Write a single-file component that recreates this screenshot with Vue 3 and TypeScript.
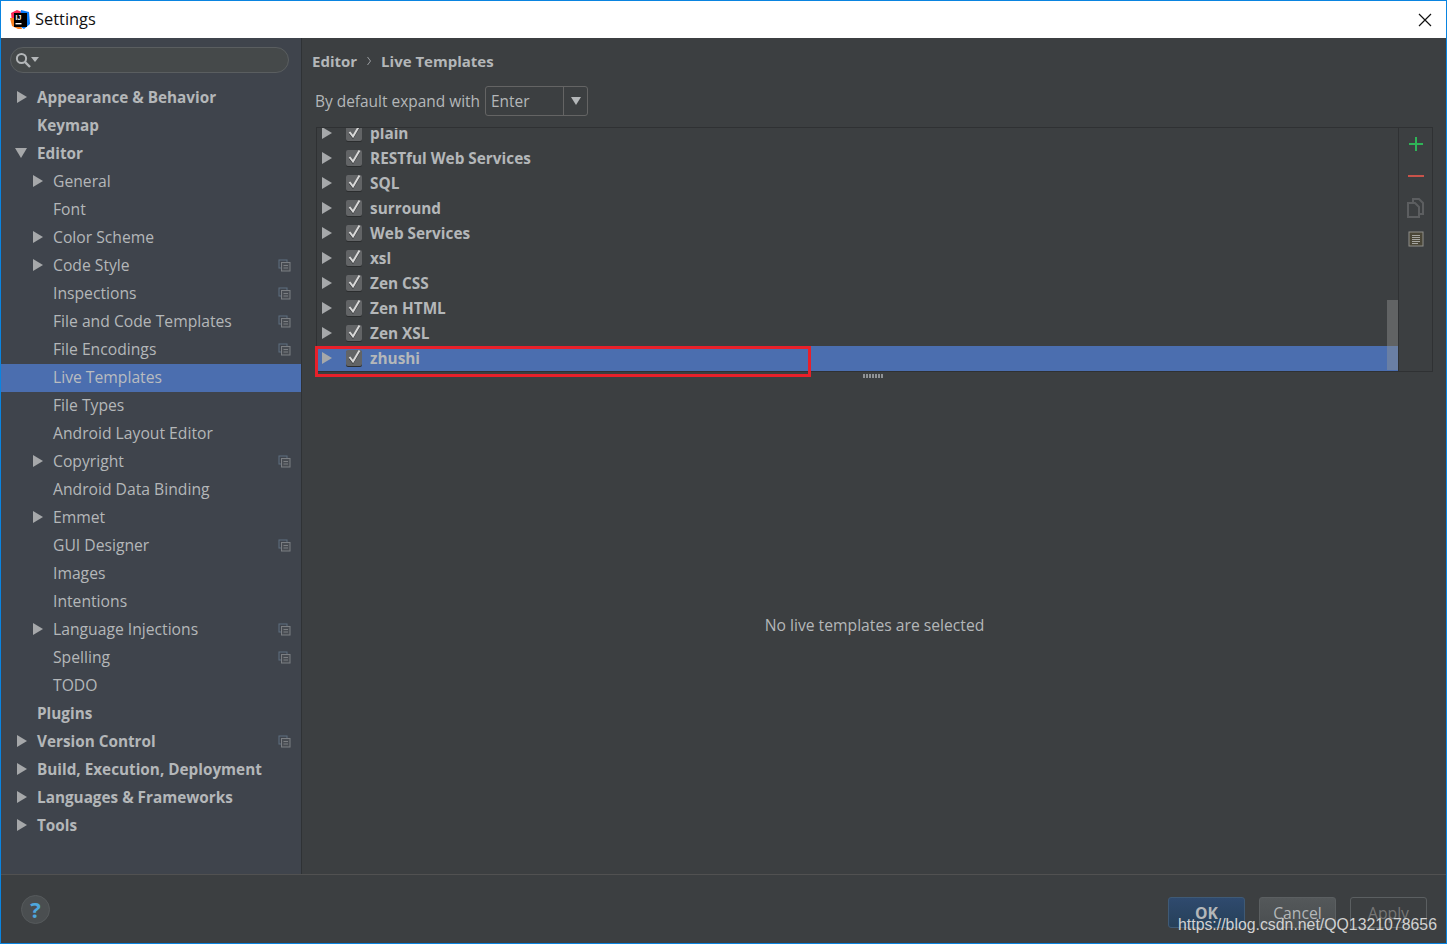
<script setup lang="ts">
interface Item { label: string; level: number; arrow?: 'right' | 'down'; copy?: boolean; active?: boolean }
const items: Item[] = [
  { label: 'Appearance & Behavior', level: 0, arrow: 'right' },
  { label: 'Keymap', level: 0 },
  { label: 'Editor', level: 0, arrow: 'down' },
  { label: 'General', level: 1, arrow: 'right' },
  { label: 'Font', level: 1 },
  { label: 'Color Scheme', level: 1, arrow: 'right' },
  { label: 'Code Style', level: 1, arrow: 'right', copy: true },
  { label: 'Inspections', level: 1, copy: true },
  { label: 'File and Code Templates', level: 1, copy: true },
  { label: 'File Encodings', level: 1, copy: true },
  { label: 'Live Templates', level: 1, active: true },
  { label: 'File Types', level: 1 },
  { label: 'Android Layout Editor', level: 1 },
  { label: 'Copyright', level: 1, arrow: 'right', copy: true },
  { label: 'Android Data Binding', level: 1 },
  { label: 'Emmet', level: 1, arrow: 'right' },
  { label: 'GUI Designer', level: 1, copy: true },
  { label: 'Images', level: 1 },
  { label: 'Intentions', level: 1 },
  { label: 'Language Injections', level: 1, arrow: 'right', copy: true },
  { label: 'Spelling', level: 1, copy: true },
  { label: 'TODO', level: 1 },
  { label: 'Plugins', level: 0 },
  { label: 'Version Control', level: 0, arrow: 'right', copy: true },
  { label: 'Build, Execution, Deployment', level: 0, arrow: 'right' },
  { label: 'Languages & Frameworks', level: 0, arrow: 'right' },
  { label: 'Tools', level: 0, arrow: 'right' },
]
const groups = ['plain', 'RESTful Web Services', 'SQL', 'surround', 'Web Services', 'xsl', 'Zen CSS', 'Zen HTML', 'Zen XSL', 'zhushi']
</script>

<template>
  <div class="window">
    <header class="titlebar">
      <svg class="logo" width="20" height="20" viewBox="0 0 20 20">
        <path d="M1 3 L7 0 L12 2 L8 10 L2 12 Z" fill="#fe2857" />
        <path d="M11 0 L19 2 L20 14 L14 19 L9 16 Z" fill="#087cfa" />
        <path d="M0 8 L2 16 L8 19 L12 19 L8 8 Z" fill="#fc801d" />
        <rect x="4" y="3" width="13" height="14" fill="#000" />
        <text x="5.5" y="10" class="logo-text">IJ</text>
        <rect x="5.5" y="13" width="6" height="1.4" fill="#fff" />
      </svg>
      <span class="title">Settings</span>
      <svg class="close" width="14" height="14" viewBox="0 0 14 14">
        <path d="M1 1 L13 13 M13 1 L1 13" stroke="#111" stroke-width="1.2" fill="none" />
      </svg>
    </header>

    <div class="body">
      <aside class="sidebar">
        <div class="search">
          <svg width="16" height="16" viewBox="0 0 16 16">
            <circle cx="6.5" cy="6.5" r="4.6" stroke="#b4b7b9" stroke-width="2" fill="none" />
            <path d="M10 10 L15 15" stroke="#b4b7b9" stroke-width="2.4" />
          </svg>
          <span class="search-caret"></span>
        </div>
        <nav class="tree">
          <div
            v-for="it in items"
            :key="it.label"
            class="row"
            :class="[`lv${it.level}`, { active: it.active }]"
          >
            <span v-if="it.arrow" class="arrow" :class="it.arrow"></span>
            <span class="row-label">{{ it.label }}</span>
            <svg v-if="it.copy" class="copy" width="13" height="13" viewBox="0 0 13 13">
              <rect x="1" y="1" width="8" height="8" fill="none" stroke="#5f6f80" />
              <rect x="3.5" y="3.5" width="8.5" height="8.5" fill="#484c52" stroke="#7b7e82" />
              <path d="M5.5 6.5 H10 M5.5 9 H10" stroke="#7b7e82" />
            </svg>
          </div>
        </nav>
      </aside>

      <main class="main">
        <div class="crumbs">
          <span>Editor</span>
          <svg width="4" height="10" viewBox="0 0 4 10"><path d="M0.5 1 L3.5 5 L0.5 9" fill="none" stroke="#9a9da0" /></svg>
          <span>Live Templates</span>
        </div>
        <div class="expand">
          <span>By default expand with</span>
          <div class="combo">
            <span class="combo-value">Enter</span>
            <span class="combo-btn"><span class="combo-caret"></span></span>
          </div>
        </div>

        <div class="table">
          <div class="list">
            <div class="rows">
              <div v-for="g in groups" :key="g" class="group" :class="{ selected: g === 'zhushi' }">
                <span class="arrow right"></span>
                <span class="check">
                  <svg width="16" height="16" viewBox="0 0 16 16">
                    <path d="M3.5 8.5 L7 13 L13.5 2" fill="none" stroke="#333537" stroke-width="1.4" />
                    <path d="M3.5 7 L7 11.5 L13.5 0.5" fill="none" stroke="#d8d8d8" stroke-width="2" />
                  </svg>
                </span>
                <span class="group-label">{{ g }}</span>
              </div>
            </div>
            <div class="scroll-thumb"></div>
          </div>
          <div class="tools">
            <svg width="16" height="16" viewBox="0 0 16 16"><path d="M8 1 V15 M1 8 H15" stroke="#2fb457" stroke-width="2" /></svg>
            <svg width="16" height="16" viewBox="0 0 16 16"><path d="M0 8 H16" stroke="#c9534a" stroke-width="2" /></svg>
            <svg width="18" height="20" viewBox="0 0 18 20">
              <path d="M6 4 V1 H12 L16 5 V16 H12" fill="none" stroke="#5c5e60" stroke-width="2" />
              <path d="M1 5 H8 L12 9 V19 H1 Z" fill="#3c3f41" stroke="#5c5e60" stroke-width="2" />
            </svg>
            <svg width="16" height="16" viewBox="0 0 16 16">
              <rect x="1" y="1" width="14" height="14" fill="#4a4637" stroke="#8f8f8b" />
              <path d="M4 4.5 H12 M4 6.5 H12 M4 8.5 H12 M4 10.5 H12 M4 12.5 H10" stroke="#a5a5a0" />
            </svg>
          </div>
        </div>
        <div class="grip"></div>
        <div class="empty">No live templates are selected</div>
        <div class="redbox"></div>
      </main>
    </div>

    <footer class="footer">
      <div class="help">?</div>
      <div class="buttons">
        <button class="btn ok">OK</button>
        <button class="btn">Cancel</button>
        <button class="btn off">Apply</button>
      </div>
    </footer>
    <div class="watermark">https://blog.csdn.net/QQ1321078656</div>
  </div>
</template>

<style>
html, body { margin: 0; background: #3c3f41; }
</style>

<style scoped>
.window {
  position: relative;
  box-sizing: border-box;
  width: 1447px;
  height: 944px;
  border: 1px solid #0a84e0;
  display: flex;
  flex-direction: column;
  overflow: hidden;
  font-family: "Open Sans", sans-serif;
  font-size: 15.7px;
  color: #b4b7b9;
  background: #3c3f41;
}
.titlebar {
  height: 37px;
  flex: none;
  background: #fff;
  display: flex;
  align-items: center;
  padding: 0 14px 0 9px;
  color: #111;
}
.logo { flex: none; margin-right: 5px; }
.logo-text { font: bold 7px "Liberation Sans", sans-serif; fill: #fff; }
.title { font-size: 16.4px; margin-top: -2px; }
.close { margin-left: auto; }
.body { flex: 1; display: flex; min-height: 0; }
.sidebar {
  width: 300px;
  flex: none;
  background: #3f444c;
  border-right: 1px solid #2f3235;
  display: flex;
  flex-direction: column;
}
.search {
  box-sizing: border-box;
  height: 26px;
  margin: 9px 12px 0 9px;
  border: 1px solid #5a5e60;
  border-radius: 13px;
  background: #45494a;
  display: flex;
  align-items: center;
  padding-left: 4px;
}
.search-caret {
  width: 0; height: 0;
  margin-bottom: 2px;
  border-left: 4px solid transparent;
  border-right: 4px solid transparent;
  border-top: 5px solid #b4b7b9;
}
.tree { margin-top: 11px; }
.row {
  position: relative;
  height: 28px;
  display: flex;
  align-items: center;
}
.row-label { margin-top: -2px; }
.row.lv0 { padding-left: 36px; font-weight: 700; font-size: 15.3px; }
.row.lv1 { padding-left: 52px; }
.row.active { background: #4b6eaf; }
.row.active .row-label { color: #b9bcc0; }
.arrow { position: absolute; width: 0; height: 0; }
.arrow.right {
  border-top: 6px solid transparent;
  border-bottom: 6px solid transparent;
  border-left: 10px solid #a6a8aa;
}
.arrow.down {
  border-left: 6px solid transparent;
  border-right: 6px solid transparent;
  border-top: 10px solid #a6a8aa;
}
.row .arrow { margin-top: -2px; }
.row.lv0 .arrow { left: 16px; }
.row.lv0 .arrow.down { left: 14px; }
.row.lv1 .arrow { left: 32px; }
.copy { margin-left: auto; margin-right: 10px; margin-top: -2px; }
.main {
  position: relative;
  flex: 1;
  min-width: 0;
  display: flex;
  flex-direction: column;
  padding: 0 13px 0 14px;
}
.crumbs {
  height: 46px;
  flex: none;
  display: flex;
  align-items: center;
  gap: 10px;
  font-weight: 700;
  font-size: 15px;
  margin-left: -4px;
}
.expand {
  height: 32px;
  margin-top: 1px;
  flex: none;
  display: flex;
  align-items: center;
  gap: 5px;
  margin-left: -1px;
  font-size: 15.45px;
}
.combo {
  box-sizing: border-box;
  width: 103px;
  height: 30px;
  border: 1px solid #646464;
  border-radius: 3px;
  display: flex;
  align-items: center;
}
.combo-value { flex: 1; padding-left: 5px; }
.combo-btn {
  width: 23px;
  height: 100%;
  border-left: 1px solid #646464;
  display: flex;
  align-items: center;
  justify-content: center;
}
.combo-caret {
  width: 0; height: 0;
  border-left: 5px solid transparent;
  border-right: 5px solid transparent;
  border-top: 8px solid #b4b7b9;
}
.table {
  box-sizing: border-box;
  height: 245px;
  flex: none;
  margin-top: 10px;
  border: 1px solid #2f3133;
  display: flex;
}
.list {
  position: relative;
  flex: 1;
  overflow: hidden;
  border-right: 1px solid #2f3133;
}
.rows { margin-top: -7px; }
.group {
  position: relative;
  height: 25px;
  display: flex;
  align-items: center;
  font-weight: 700;
  font-size: 15.35px;
}
.group .arrow { left: 5px; margin-top: -1px; }
.group.selected { background: #4b6eaf; }
.check {
  position: absolute;
  left: 29px;
  top: 4px;
  box-sizing: border-box;
  width: 16px;
  height: 16px;
  border-radius: 2px;
  background: #626466;
  box-shadow: 0 1px 0 #2b2d2e;
}
.check svg { display: block; }
.group-label { margin-left: 53px; margin-top: -2px; }
.scroll-thumb {
  position: absolute;
  right: 0;
  bottom: 1px;
  width: 11px;
  height: 70px;
  background: rgba(150, 150, 150, 0.42);
}
.tools {
  width: 33px;
  flex: none;
  display: flex;
  flex-direction: column;
  align-items: center;
}
.tools svg { flex: none; }
.tools svg:nth-child(1) { margin-top: 8px; }
.tools svg:nth-child(2) { margin-top: 16px; }
.tools svg:nth-child(3) { margin-top: 14px; }
.tools svg:nth-child(4) { margin-top: 13px; }
.grip {
  align-self: center;
  width: 20px;
  height: 4px;
  margin: 2px 3px 0 0;
  flex: none;
  background-image: radial-gradient(circle at 1px 1px, #8f9295 1px, transparent 1px);
  background-size: 3px 2px;
}
.empty {
  flex: 1;
  display: flex;
  align-items: center;
  justify-content: center;
  padding-bottom: 2px;
}
.redbox {
  position: absolute;
  left: 13px;
  top: 308px;
  box-sizing: border-box;
  width: 496px;
  height: 31px;
  border: 3px solid #e8202a;
}
.footer {
  box-sizing: border-box;
  height: 69px;
  flex: none;
  border-top: 1px solid #515151;
  display: flex;
  justify-content: space-between;
  padding: 20px 19px 0 20px;
}
.help {
  box-sizing: border-box;
  width: 29px;
  height: 29px;
  border-radius: 50%;
  background: #4a4e50;
  border: 1px solid #565a5c;
  color: #4ea6dc;
  font: 700 22px/27px "Open Sans", sans-serif;
  text-align: center;
}
.buttons { display: flex; gap: 14px; margin-top: 2px; }
.btn {
  box-sizing: border-box;
  width: 77px;
  height: 31px;
  border: 1px solid #5b5f61;
  border-radius: 3px;
  background: linear-gradient(#54585a, #4a4e50);
  color: #b4b7b9;
  font: 15.7px/27px "Open Sans", sans-serif;
  padding: 2px 0 0;
}
.btn.ok {
  font-weight: 700;
  background: linear-gradient(#2f4a6e, #264059);
  border-color: #3f5a76;
}
.btn.off {
  background: transparent;
  color: #777;
}
.watermark {
  position: absolute;
  right: 9px;
  bottom: 9px;
  font: 15.85px "Liberation Sans", sans-serif;
  color: #d2d2d2;
}
</style>
